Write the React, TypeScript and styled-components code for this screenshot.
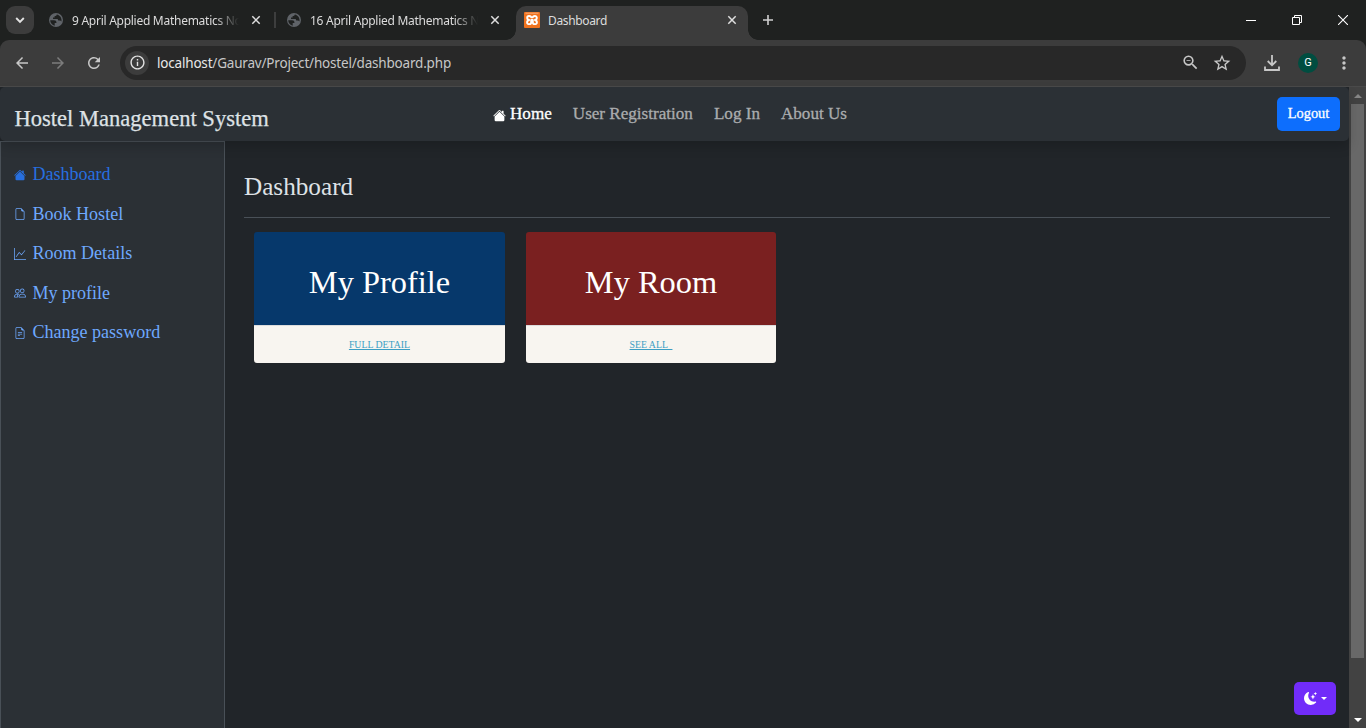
import React from "react";
import styled, { createGlobalStyle } from "styled-components";
import {
  BsHouseFill,
  BsFileEarmark,
  BsGraphUp,
  BsPeople,
  BsFileEarmarkText,
  BsMoonStarsFill,
} from "react-icons/bs";
import {
  MdArrowBack,
  MdArrowForward,
  MdRefresh,
  MdInfoOutline,
  MdZoomOut,
  MdStarBorder,
  MdMoreVert,
} from "react-icons/md";

const GlobalStyle = createGlobalStyle`
  * { box-sizing: border-box; }
  body { margin: 0; background: #212529; overflow: hidden; }
`;

const uiFont = `"Noto Sans", "Open Sans", sans-serif`;
const pageFont = `"Liberation Serif", "Times New Roman", serif`;

const Window = styled.div`
  width: 1366px;
  height: 728px;
  display: flex;
  flex-direction: column;
  overflow: hidden;
  background: #1f2020;
`;

/* ---------- browser tabs ---------- */

const TabStrip = styled.div`
  height: 40px;
  flex: none;
  display: flex;
  align-items: flex-start;
  background: #1f2120;
  padding-left: 6px;
`;

const TabSearch = styled.div`
  width: 28px;
  height: 28px;
  margin: 6px 14px 0 0;
  border-radius: 9px;
  background: #3c3c3c;
  display: flex;
  align-items: center;
  justify-content: center;
`;

const Tab = styled.div<{ $width: number; $active?: boolean }>`
  position: relative;
  width: ${(p) => p.$width}px;
  height: ${(p) => (p.$active ? 34 : 28)}px;
  margin: 6px 0 0 ${(p) => (p.$active ? 5 : 0)}px;
  padding: 0 10px 0 ${(p) => (p.$active ? 8 : 0)}px;
  display: flex;
  align-items: flex-start;
  border-radius: 10px 10px 0 0;
  background: ${(p) => (p.$active ? "#3c3c3c" : "transparent")};
`;

const TabFoot = styled.i<{ $side: "left" | "right" }>`
  position: absolute;
  bottom: 0;
  ${(p) => p.$side}: -10px;
  width: 10px;
  height: 10px;
  background: radial-gradient(
    circle at ${(p) => (p.$side === "left" ? "0 0" : "100% 0")},
    transparent 9.5px,
    #3c3c3c 10px
  );
`;

const Favicon = styled.span`
  width: 16px;
  height: 28px;
  flex: none;
  display: flex;
  align-items: center;
`;

const TabTitle = styled.span<{ $fade?: boolean; $spacing: number }>`
  flex: 1;
  margin-left: 8px;
  font: 12px/29px ${uiFont};
  letter-spacing: ${(p) => p.$spacing}px;
  color: #dcdcdc;
  white-space: nowrap;
  overflow: hidden;
  ${(p) =>
    p.$fade &&
    "mask-image: linear-gradient(90deg, #000 calc(100% - 24px), transparent 100%);"}
`;

const TabClose = styled.span`
  width: 12px;
  height: 28px;
  margin-left: 11px;
  flex: none;
  display: flex;
  align-items: center;
  justify-content: center;
`;

const TabDivider = styled.span`
  width: 2px;
  height: 16px;
  margin: 12px 12px 0 0;
  background: #3d3e3e;
`;

const NewTab = styled.div`
  margin: 12px 0 0 12px;
  width: 16px;
  height: 16px;
`;

const WindowControls = styled.div`
  margin-left: auto;
  display: flex;
  height: 40px;
`;

const WindowControl = styled.span`
  width: 46px;
  height: 40px;
  display: flex;
  align-items: center;
  justify-content: center;
`;

/* ---------- browser toolbar ---------- */

const ToolbarBack = styled.div`
  height: 47px;
  flex: none;
  background: #1f2120;
`;

const Toolbar = styled.div`
  height: 47px;
  display: flex;
  align-items: center;
  padding: 0 12px 1px 12px;
  background: #3c3c3c;
  border-radius: 9px 9px 0 0;
  border-bottom: 1px solid #4a4a4a;
`;

const ToolButton = styled.span<{ $width: number; $color?: string }>`
  width: ${(p) => p.$width}px;
  flex: none;
  display: flex;
  justify-content: center;
  color: ${(p) => p.$color ?? "#c7c7c7"};
`;

const AddressBar = styled.div`
  flex: none;
  width: 1126px;
  height: 34px;
  margin: 0 16px;
  padding: 0 3px 0 5px;
  display: flex;
  align-items: center;
  border-radius: 17px;
  background: #282828;
`;

const SiteInfo = styled.span`
  width: 24px;
  height: 24px;
  border-radius: 50%;
  display: flex;
  align-items: center;
  justify-content: center;
  background: #3c3c3c;
  color: #e3e3e3;
`;

const Url = styled.span`
  flex: 1;
  margin-left: 8px;
  font: 13.5px/20px ${uiFont};
  letter-spacing: -0.19px;
  padding-top: 1px;
  color: #c7c7c7;
  b {
    font-weight: 400;
    color: #e8e8e8;
  }
`;

const Avatar = styled.span`
  width: 20px;
  height: 20px;
  margin: 0 16px;
  border-radius: 50%;
  background: #004d40;
  color: #fff;
  font: 11px/20px Roboto, sans-serif;
  text-align: center;
`;

/* ---------- page ---------- */

const Viewport = styled.div`
  flex: 1;
  min-height: 0;
  display: flex;
`;

const Page = styled.div`
  position: relative;
  width: 1349px;
  display: flex;
  flex-direction: column;
  background: #212529;
  font-family: ${pageFont};
`;

const Navbar = styled.nav`
  position: relative;
  z-index: 1;
  height: 54px;
  flex: none;
  display: flex;
  align-items: flex-start;
  padding: 10px 9px 0 14.5px;
  border-radius: 5px;
  background: #2b3035;
  box-shadow: 0 6px 12px rgba(0, 0, 0, 0.16);
`;

const Brand = styled.span`
  width: 478.5px;
  font-size: 22.55px;
  line-height: 44px;
  color: #dee2e6;
  -webkit-text-stroke: 0.25px #dee2e6;
  white-space: nowrap;
`;

const NavLinks = styled.div`
  flex: 1;
  display: flex;
  gap: 21px;
`;

const NavLink = styled.a<{ $active?: boolean }>`
  display: flex;
  align-items: center;
  gap: 4px;
  height: 34px;
  font-size: 17.1px;
  white-space: nowrap;
  color: ${(p) => (p.$active ? "#fff" : "#aaacae")};
  -webkit-text-stroke: 0.3px currentColor;
  svg {
    margin-top: 3px;
    stroke: none;
  }
`;

const LogoutButton = styled.button`
  width: 63px;
  height: 34px;
  padding: 0;
  border: 0;
  border-radius: 5px;
  background: #0d6efd;
  color: #fff;
  font: 14.4px/32px ${pageFont};
  padding-bottom: 2px;
  -webkit-text-stroke: 0.3px #fff;
`;

const Body = styled.div`
  flex: 1;
  min-height: 0;
  display: flex;
`;

const Sidebar = styled.aside`
  width: 225px;
  flex: none;
  padding: 13px 0 0 13px;
  background: #2b3035;
  border: 1px solid #495057;
  border-bottom: 0;
`;

const SideLink = styled.a<{ $active?: boolean }>`
  display: flex;
  align-items: center;
  gap: 6.5px;
  height: 39.5px;
  font-size: 18.05px;
  white-space: nowrap;
  color: ${(p) => (p.$active ? "#276fe0" : "#6ea8fe")};
`;

const Main = styled.main`
  flex: 1;
  padding: 24px 19px 0;
`;

const Heading = styled.h1`
  margin: 0;
  height: 53px;
  border-bottom: 1px solid #495057;
  font-weight: 400;
  font-size: 25.2px;
  line-height: 44px;
  color: #dee2e6;
`;

const Cards = styled.div`
  display: flex;
  gap: 21px;
  padding: 14px 10px;
`;

const Card = styled.div<{ $width: number }>`
  width: ${(p) => p.$width}px;
  height: 131px;
  text-align: center;
`;

const CardTitle = styled.div<{ $color: string }>`
  height: 93px;
  padding-top: 7px;
  border-radius: 3px 3px 0 0;
  background: ${(p) => p.$color};
  color: #fff;
  font-size: 32.4px;
  line-height: 87px;
`;

const CardLink = styled.a`
  display: block;
  height: 38px;
  border-top: 1px solid #dcdcdc;
  border-radius: 0 0 3px 3px;
  background: #f8f5f0;
  color: #3c9fc4;
  font-size: 9.8px;
  line-height: 37px;
  text-decoration: underline;
  white-space: pre;
`;

const ThemeToggle = styled.button`
  position: absolute;
  right: 13px;
  bottom: 13px;
  width: 42px;
  height: 33px;
  padding: 0;
  border: 0;
  border-radius: 5px;
  background: #712cf9;
  color: #fff;
  display: flex;
  align-items: center;
  justify-content: center;
  gap: 4px;
`;

const Caret = styled.i`
  border: 3px solid transparent;
  border-top-color: #fff;
  border-bottom: 0;
`;

const Scrollbar = styled.div`
  width: 17px;
  display: flex;
  flex-direction: column;
  align-items: center;
  background: #424242;
`;

const ScrollArrow = styled.span<{ $up?: boolean }>`
  height: 17px;
  display: flex;
  align-items: center;
  &::before {
    content: "";
    border: 4px solid transparent;
    ${(p) =>
      p.$up
        ? "border-top: 0; border-bottom-color: #868686;"
        : "border-bottom: 0; border-top-color: #fff;"}
  }
`;

const ScrollThumb = styled.div`
  width: 13px;
  height: 554px;
  margin-bottom: auto;
  background: #686868;
`;

const GlobeIcon = () => (
  <svg width="16" height="16" viewBox="0 0 16 16">
    <circle cx="8" cy="8" r="7" fill="#5f6368" />
    <path
      d="M2.2 8.3H6c1.7 0 2.4.8 2.4 1.9v.9H6.7v2.6C4.300 13.200 2.200 11.200 2.200 8.300ZM8.800 2.400c-.2 1.300-1 1.500-2.200 1.500v1.700H5v1.300h3.900c1 0 1.300.7 1.300 1.600h1.500c.8 0 1.300.4 1.700 1 .8-3.200-1.300-6.400-4.600-7.100Z"
      fill="#1f2120"
    />
  </svg>
);

const XamppIcon = () => (
  <svg width="16" height="16" viewBox="0 0 16 16">
    <rect width="16" height="16" rx="1" fill="#f0731f" />
    <path d="M1.500 1.200h13" stroke="#fbb98a" strokeWidth="0.800" />
    <path
      d="M7.200 5.300C6.800 3.700 3.200 3.300 3.200 5.700c0 1.300.7 2.100 1.900 2.300-1.300.3-2 1.100-2 2.400 0 2.500 4.100 2.100 4.100 0V8h1.600v2.400c0 2.100 4.100 2.500 4.100 0 0-1.300-.7-2.100-2-2.400 1.200-.2 1.900-1 1.900-2.300 0-2.400-3.600-2-4-.4Z"
      fill="none"
      stroke="#fff"
      strokeWidth="1.900"
      strokeLinejoin="round"
    />
  </svg>
);

const CloseIcon = () => (
  <svg width="10" height="10" viewBox="0 0 10 10">
    <path d="m1.300 1.300 7.400 7.400M8.700 1.300 1.300 8.700" stroke="#dedede" strokeWidth="1.500" />
  </svg>
);

const DownloadIcon = () => (
  <svg width="18" height="18" viewBox="0 0 18 18" fill="none" stroke="#c7c7c7" strokeWidth="1.800">
    <path d="M9 1v10M4.700 7 9 11.300 13.300 7M2 12.500V16h14v-3.500" />
  </svg>
);

const sideItems = [
  { label: "Dashboard", icon: BsHouseFill, active: true },
  { label: "Book Hostel", icon: BsFileEarmark },
  { label: "Room Details", icon: BsGraphUp },
  { label: "My profile", icon: BsPeople },
  { label: "Change password", icon: BsFileEarmarkText },
];

export default function App() {
  return (
    <Window>
      <GlobalStyle />
      <TabStrip>
        <TabSearch>
          <svg width="10" height="8" viewBox="0 0 10 8">
            <path d="m1.200 2 3.800 3.800L8.800 2" fill="none" stroke="#e3e3e3" strokeWidth="1.900" />
          </svg>
        </TabSearch>
        <Tab $width={224}>
          <Favicon><GlobeIcon /></Favicon>
          <TabTitle $fade $spacing={-0.27}>9 April Applied Mathematics No</TabTitle>
          <TabClose><CloseIcon /></TabClose>
        </Tab>
        <TabDivider style={{ marginLeft: 2 }} />
        <Tab $width={225} style={{ marginLeft: -2 }}>
          <Favicon><GlobeIcon /></Favicon>
          <TabTitle $fade $spacing={-0.27}>16 April Applied Mathematics N</TabTitle>
          <TabClose><CloseIcon /></TabClose>
        </Tab>
        <Tab $width={232} $active>
          <TabFoot $side="left" />
          <Favicon><XamppIcon /></Favicon>
          <TabTitle $spacing={-0.35}>Dashboard</TabTitle>
          <TabClose><CloseIcon /></TabClose>
          <TabFoot $side="right" />
        </Tab>
        <NewTab>
          <svg width="16" height="16" viewBox="0 0 16 16">
            <path d="M8 3v10M3 8h10" stroke="#d0d0d0" strokeWidth="1.600" />
          </svg>
        </NewTab>
        <WindowControls>
          <WindowControl>
            <svg width="10" height="10"><path d="M0 5.500h10" stroke="#fff" /></svg>
          </WindowControl>
          <WindowControl>
            <svg width="10" height="10" fill="none" stroke="#fff">
              <path d="M.5 2.500h7v7h-7zM2.500 2V.5h7v7H8" />
            </svg>
          </WindowControl>
          <WindowControl>
            <svg width="10" height="10"><path d="m0 0 10 10M10 0 0 10" stroke="#fff" strokeWidth="1.100" /></svg>
          </WindowControl>
        </WindowControls>
      </TabStrip>

      <ToolbarBack>
        <Toolbar>
          <ToolButton $width={20}><MdArrowBack size={18} /></ToolButton>
          <ToolButton $width={52} $color="#7c7c7c"><MdArrowForward size={18} /></ToolButton>
          <ToolButton $width={20}><MdRefresh size={18} /></ToolButton>
          <AddressBar>
            <SiteInfo><MdInfoOutline size={17} /></SiteInfo>
            <Url><b>localhost</b>/Gaurav/Project/hostel/dashboard.php</Url>
            <ToolButton $width={22}><MdZoomOut size={19} /></ToolButton>
            <ToolButton $width={42}><MdStarBorder size={20} /></ToolButton>
          </AddressBar>
          <ToolButton $width={20}><DownloadIcon /></ToolButton>
          <Avatar>G</Avatar>
          <ToolButton $width={20}><MdMoreVert size={20} /></ToolButton>
        </Toolbar>
      </ToolbarBack>

      <Viewport>
        <Page>
          <Navbar>
            <Brand>Hostel Management System</Brand>
            <NavLinks>
              <NavLink $active><BsHouseFill size={13} />Home</NavLink>
              <NavLink>User Registration</NavLink>
              <NavLink>Log In</NavLink>
              <NavLink>About Us</NavLink>
            </NavLinks>
            <LogoutButton>Logout</LogoutButton>
          </Navbar>
          <Body>
            <Sidebar>
              {sideItems.map(({ label, icon: Icon, active }) => (
                <SideLink key={label} $active={active}>
                  <Icon size={12} />
                  {label}
                </SideLink>
              ))}
            </Sidebar>
            <Main>
              <Heading>Dashboard</Heading>
              <Cards>
                <Card $width={251}>
                  <CardTitle $color="#06386b">My Profile</CardTitle>
                  <CardLink>FULL DETAIL</CardLink>
                </Card>
                <Card $width={250}>
                  <CardTitle $color="#7a2020">My Room</CardTitle>
                  <CardLink>{"SEE ALL \u00a0"}</CardLink>
                </Card>
              </Cards>
            </Main>
          </Body>
          <ThemeToggle>
            <BsMoonStarsFill size={13} />
            <Caret />
          </ThemeToggle>
        </Page>
        <Scrollbar>
          <ScrollArrow $up />
          <ScrollThumb />
          <ScrollArrow />
        </Scrollbar>
      </Viewport>
    </Window>
  );
}
